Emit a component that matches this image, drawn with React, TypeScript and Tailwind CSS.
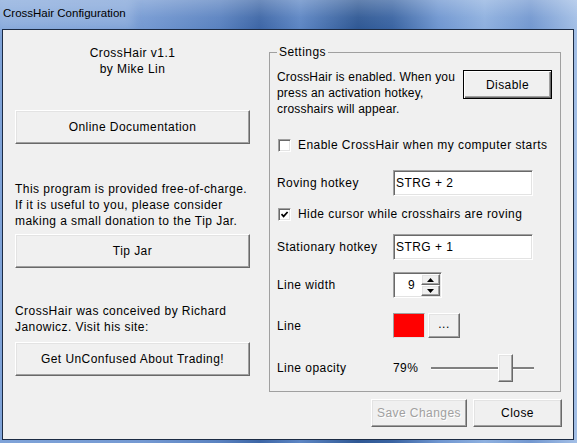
import React from "react";

const btn =
  "flex items-center justify-center bg-[#f0f0f0] border border-t-white border-l-white border-r-[#696969] border-b-[#696969] shadow-[inset_-1px_-1px_0_#a0a0a0,inset_1px_1px_0_#e3e3e3]";

const sunken =
  "bg-white border border-t-[#a0a0a0] border-l-[#a0a0a0] border-r-white border-b-white shadow-[inset_1px_1px_0_#696969,inset_-1px_-1px_0_#e3e3e3]";

function CheckBox({ checked }: { checked?: boolean }) {
  return (
    <div className={"w-[13px] h-[13px] flex items-center justify-center " + sunken}>
      {checked && (
        <svg width="9" height="9" viewBox="0 0 9 9">
          <path d="M1.5 4.2 L3.6 6.4 L7.6 2" fill="none" stroke="#000" strokeWidth="1.7" />
        </svg>
      )}
    </div>
  );
}

export default function App() {
  return (
    <div className="w-[577px] h-[443px] flex flex-col overflow-hidden bg-[linear-gradient(90deg,#7fa3d8_0%,#7499d2_25%,#5a82c0_38%,#3d66a6_45%,#5d86c4_52%,#2f5894_62%,#3a64a2_68%,#6f96d0_76%,#8eb0df_84%,#7398d0_92%,#a3bfe6_100%)]">
      <div className="h-[29px] flex items-center pl-[3px] bg-[linear-gradient(180deg,rgba(255,255,255,0.25)_0%,rgba(255,255,255,0.05)_60%,rgba(255,255,255,0)_100%)]">
        <span className="font-['Liberation_Sans',Arial,sans-serif] text-[11.5px] leading-[16px] text-black bg-[rgba(180,204,236,0.35)] shadow-[0_0_10px_8px_rgba(180,204,236,0.35)] -mt-[3px]">
          CrossHair Configuration
        </span>
      </div>
      <div className="flex-1 ml-[2px] mr-[3px] mb-[3px] border border-[#1c2b44] bg-[#f0f0f0] flex font-['Liberation_Sans',Arial,sans-serif] text-[12px] leading-[16px] tracking-[0.45px] text-black">
        {/* left column */}
        <div className="w-[235px] ml-[12px] flex flex-col">
          <div className="pt-[15px] text-center">
            <div>CrossHair v1.1</div>
            <div>by Mike Lin</div>
          </div>
          <div className={"mt-[33px] h-[34px] " + btn}>Online Documentation</div>
          <p className="mt-[37px] whitespace-nowrap">
            This program is provided free-of-charge.
            <br />
            If it is useful to you, please consider
            <br />
            making a small donation to the Tip Jar.
          </p>
          <div className={"mt-[5px] h-[34px] " + btn}>Tip Jar</div>
          <p className="mt-[35px] whitespace-nowrap">
            CrossHair was conceived by Richard
            <br />
            Janowicz. Visit his site:
          </p>
          <div className={"mt-[7px] h-[34px] " + btn}>Get UnConfused About Trading!</div>
        </div>

        {/* right column */}
        <div className="ml-[19px] w-[292px] flex flex-col">
          <fieldset className="mt-[14px] border border-[#a0a0a0] pl-[7px] pr-[8px] pt-[9px] pb-[9px]">
            <legend className="px-[2px]">Settings</legend>
            <div className="flex justify-between">
              <div className="whitespace-nowrap tracking-[0.2px]">
                CrossHair is enabled. When you
                <br />
                press an activation hotkey,
                <br />
                crosshairs will appear.
              </div>
              <div className="mt-[1px] w-[89px] h-[29px] shrink-0 flex items-center justify-center bg-[#f0f0f0] border border-[#000] shadow-[inset_1px_1px_0_#fff,inset_-1px_-1px_0_#696969,inset_-2px_-2px_0_#a0a0a0]">
                Disable
              </div>
            </div>
            <div className="mt-[20px] h-[16px] flex items-center whitespace-nowrap">
              <div className="ml-[1px]">
                <CheckBox />
              </div>
              <span className="ml-[7px]">Enable CrossHair when my computer starts</span>
            </div>
            <div className="mt-[17px] h-[26px] flex items-center">
              <div className="w-[116px]">Roving hotkey</div>
              <div className={"w-[140px] h-[26px] flex items-center pl-[2px] " + sunken}>STRG + 2</div>
            </div>
            <div className="mt-[10px] h-[16px] flex items-center whitespace-nowrap">
              <div className="ml-[1px]">
                <CheckBox checked />
              </div>
              <span className="ml-[7px]">Hide cursor while crosshairs are roving</span>
            </div>
            <div className="mt-[12px] h-[26px] flex items-center">
              <div className="w-[116px]">Stationary hotkey</div>
              <div className={"w-[140px] h-[26px] flex items-center pl-[2px] " + sunken}>STRG + 1</div>
            </div>
            <div className="mt-[12px] h-[26px] flex items-center">
              <div className="w-[116px]">Line width</div>
              <div className={"w-[49px] h-[26px] flex " + sunken}>
                <div className="flex-1 flex items-center justify-end pr-[6px]">9</div>
                <div className="w-[20px] flex flex-col py-[1px] pr-[1px]">
                  <div className={"flex-1 " + btn}>
                    <svg width="7" height="4" viewBox="0 0 7 4">
                      <path d="M0 4 L3.5 0 L7 4 Z" fill="#000" />
                    </svg>
                  </div>
                  <div className={"flex-1 " + btn}>
                    <svg width="7" height="4" viewBox="0 0 7 4">
                      <path d="M0 0 L3.5 4 L7 0 Z" fill="#000" />
                    </svg>
                  </div>
                </div>
              </div>
            </div>
            <div className="mt-[15px] h-[25px] flex items-center">
              <div className="w-[116px]">Line</div>
              <div className="w-[32px] h-[25px] bg-[#ff0000] border border-t-[#a0a0a0] border-l-[#a0a0a0] border-r-[#e3e3e3] border-b-[#e3e3e3]" />
              <div className={"ml-[3px] w-[32px] h-[25px] pb-[4px] " + btn}>...</div>
            </div>
            <div className="mt-[16px] h-[28px] flex items-center">
              <div className="w-[116px]">Line opacity</div>
              <div className="w-[38px]">79%</div>
              <div className="relative w-[103px] h-[28px] flex items-center">
                <div className="w-full h-[3px] bg-[#808080] border-b border-white" />
                <div className={"absolute left-[67px] top-0 w-[15px] h-[28px] " + btn} />
              </div>
            </div>
          </fieldset>
          <div className="mt-[7px] flex justify-end gap-[6px] -mr-[1px]">
            <div className={"w-[96px] h-[28px] text-[#a0a0a0] [text-shadow:1px_1px_0_#fff] " + btn}>Save Changes</div>
            <div className={"w-[89px] h-[28px] " + btn}>Close</div>
          </div>
        </div>
      </div>
    </div>
  );
}
